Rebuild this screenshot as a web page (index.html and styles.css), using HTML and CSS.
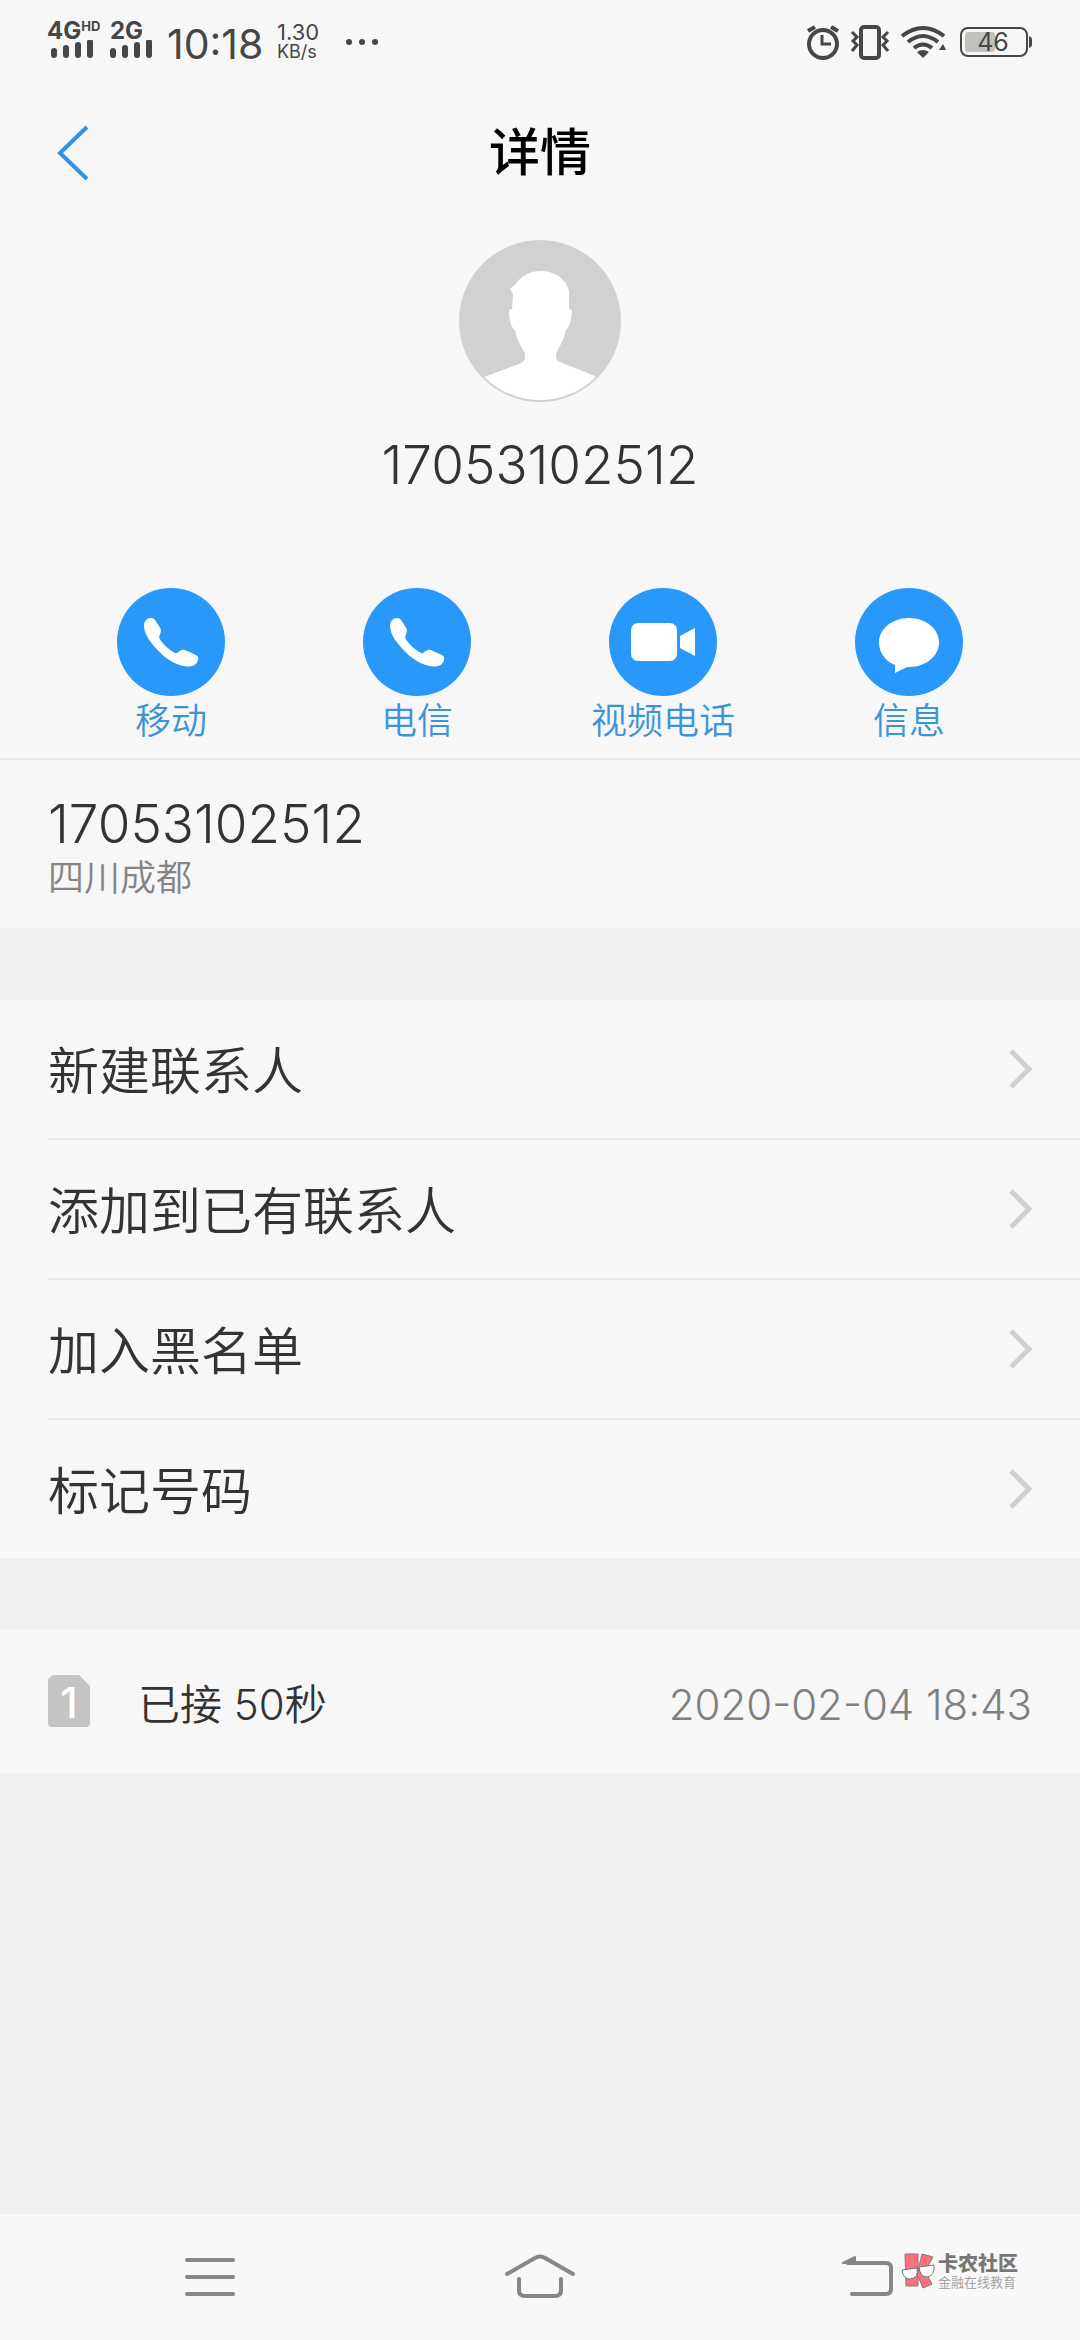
FILE: index.html
```html
<!DOCTYPE html>
<html lang="zh-CN">
<head>
<meta charset="utf-8">
<meta name="viewport" content="width=device-width, initial-scale=1">
<title>详情</title>
<link rel="stylesheet" href="styles.css">
</head>
<body>
<svg class="defs" width="0" height="0" aria-hidden="true">
  <symbol id="phone" viewBox="0 0 108 108">
    <path d="M27 38C27 33 30 30 34 30C36.500 30 38 31.500 39 33.500L43.500 40.500C44.500 42.500 43.500 45 42.500 47.500C41.800 49.500 42.500 51 44 53C48 58 53 62.500 58 65C59.500 65.500 60.500 65 62 63.500C64.500 61.800 66.500 61.300 69 62.500L79 67C81 68 81.500 70 81 72C80 76.500 76 78.500 71 78.500C62 78.500 52 73 43.500 65C34 56 27 46 27 38Z"/>
  </symbol>
  <symbol id="chevron" viewBox="0 0 24 40">
    <path d="M3 2 21 20 3 38" fill="none" stroke="#d0d0d0" stroke-width="5"/>
  </symbol>
</svg>

<div class="panel">
  <div class="status">
    <div class="signal">
      <span class="net">4G<sup>HD</sup></span>
      <svg width="52" height="20" viewBox="0 0 52 20"><path d="M7 11v4M19 8v7M31 5v10M43 2v13" class="bars"/></svg>
    </div>
    <div class="signal">
      <span class="net">2G</span>
      <svg width="52" height="20" viewBox="0 0 52 20"><path d="M3 11v4M15 8v7M27 5v10M39 2v13" class="bars"/></svg>
    </div>
    <time class="clock">10:18</time>
    <div class="speed"><span class="rate">1.30</span><span class="unit">KB/s</span></div>
    <svg class="dots" width="34" height="8" viewBox="0 0 34 8"><circle cx="4" cy="4" r="3"/><circle cx="17" cy="4" r="3"/><circle cx="30" cy="4" r="3"/></svg>
    <svg class="sysicons" width="230" height="40" viewBox="803 22 230 40" role="img" aria-label="闹钟、振动、无线网络">
      <g fill="none" stroke="#464646" stroke-width="4">
        <circle cx="823" cy="44" r="14"/>
        <path d="M822 35v9h9" stroke-width="3"/>
        <path d="M808 31l7-4M838 31l-7-4"/>
        <rect x="861" y="27" width="18" height="31" rx="3"/>
        <path d="M852 32l5 5-4 4 4 4-5 6M888 32l-5 5 4 4-4 4 5 6" stroke-width="3"/>
        <path d="M902 36Q923 20 944 36M908 42Q923 30 938 42M914 48Q923 41 932 48"/>
        <rect x="961" y="28" width="66" height="28" rx="7" stroke-width="2"/>
      </g>
      <g fill="#464646">
        <path d="M917 52Q923 48 929 52L923 58ZM939 50l4-6 3 6Z"/>
        <path d="M1029 36q3 1 3 3v6q0 2-3 3Z"/>
      </g>
      <rect x="965" y="32" width="30" height="20" rx="3" fill="#c1c1be"/>
      <text x="993" y="51" text-anchor="middle" class="level">46</text>
    </svg>
  </div>

  <header class="titlebar">
    <button class="back" type="button" aria-label="返回">
      <svg width="34" height="56" viewBox="0 0 34 56"><path d="M32 2 5 28 32 54" fill="none" stroke="#2f94e4" stroke-width="4"/></svg>
    </button>
    <h1>详情</h1>
  </header>

  <section class="profile">
    <svg class="avatar" width="162" height="162" viewBox="0 0 162 162" role="img" aria-label="头像">
      <defs><clipPath id="face"><circle cx="81" cy="81" r="79"/></clipPath></defs>
      <circle cx="81" cy="81" r="81" fill="#d1d1d1"/>
      <path clip-path="url(#face)" fill="#fff" d="M51 49L56 45C61 37 70 31 82 31C97 31 109 41 110 52L110 69Q113 69 113 72C112 80 111 87 107 90C105 99 101 106 97 113C97 119 98 121 101 122L136 136L145 165H15L25 137L60 124C65 122 66 120 66 117L66 113C61 106 58 99 56 90C51 87 50 77 50 71Q50 69 53 69L54 54Z"/>
    </svg>
    <p class="number">17053102512</p>
  </section>

  <nav class="actions" aria-label="联系方式">
    <button type="button">
      <svg width="108" height="108" viewBox="0 0 108 108"><circle cx="54" cy="54" r="54" fill="#2898fb"/><use href="#phone"/></svg>
      <span>移动</span>
    </button>
    <button type="button">
      <svg width="108" height="108" viewBox="0 0 108 108"><circle cx="54" cy="54" r="54" fill="#2898fb"/><use href="#phone"/></svg>
      <span>电信</span>
    </button>
    <button type="button">
      <svg width="108" height="108" viewBox="0 0 108 108"><circle cx="54" cy="54" r="54" fill="#2898fb"/><rect x="22" y="35" width="46" height="38" rx="7"/><path d="M71 48L86 40V68L71 60Z"/></svg>
      <span>视频电话</span>
    </button>
    <button type="button">
      <svg width="108" height="108" viewBox="0 0 108 108"><circle cx="54" cy="54" r="54" fill="#2898fb"/><path d="M54 30C71 30 84 41 84 54.500C84 68 71 79 54 79Q52 79 50 80L40 85V77C30 73 24 64 24 54.500C24 41 37 30 54 30Z"/></svg>
      <span>信息</span>
    </button>
  </nav>
</div>

<section class="panel origin">
  <p class="number">17053102512</p>
  <p class="place">四川成都</p>
</section>

<ul class="panel menu">
  <li><a href="#new"><span>新建联系人</span><svg width="24" height="40"><use href="#chevron"/></svg></a></li>
  <li><a href="#add"><span>添加到已有联系人</span><svg width="24" height="40"><use href="#chevron"/></svg></a></li>
  <li><a href="#block"><span>加入黑名单</span><svg width="24" height="40"><use href="#chevron"/></svg></a></li>
  <li><a href="#mark"><span>标记号码</span><svg width="24" height="40"><use href="#chevron"/></svg></a></li>
</ul>

<section class="panel log">
  <svg width="42" height="52" viewBox="0 0 42 52"><path d="M5 0H31L42 11V48Q42 52 38 52H4Q0 52 0 48V4Z" fill="#c4c4c4"/><text x="21" y="43" text-anchor="middle" class="sim">1</text></svg>
  <span class="call">已接 50秒</span>
  <time datetime="2020-02-04T18:43">2020-02-04 18:43</time>
</section>

<footer class="navbar">
  <button type="button" aria-label="菜单"><svg width="72" height="48" viewBox="0 0 72 48"><path d="M13 7H59M13 24H59M13 41H59"/></svg></button>
  <button type="button" aria-label="主页"><svg width="72" height="48" viewBox="0 0 72 48"><path d="M3 21L31 5Q36 2 41 5L69 21M15 26V37Q15 43 21 43H51Q57 43 57 37V26"/></svg></button>
  <button type="button" aria-label="返回上一级"><svg width="72" height="48" viewBox="0 0 72 48"><path d="M18 41H52Q57 41 57 36V15Q57 10 52 10H14"/><path d="M9 10L21 4V10Z" class="tip"/></svg></button>
  <div class="brand">
    <svg width="36" height="38" viewBox="0 0 36 38">
      <g fill="#f9717b" stroke="#8d7476">
        <path d="M5 2H18V34H6Z"/>
        <path d="M22 2L33 5L25 19L32 32L23 36L17 22Z"/>
      </g>
      <g fill="#fff" stroke="#777">
        <path d="M2 18L17 16Q19 26 10 27Q3 27 2 18Z"/><path d="M19 15L34 13Q35 24 27 25Q20 25 19 15Z"/>
      </g>
    </svg>
    <p><strong>卡农社区</strong><small>金融在线教育</small></p>
  </div>
</footer>
</body>
</html>
```
FILE: styles.css
```css
* { box-sizing: border-box; }

body {
  margin: 0;
  min-height: 100vh;
  display: flex;
  flex-direction: column;
  background: #efefef;
  color: #333;
  font-family: Inter, "Noto Sans CJK SC", sans-serif;
  font-weight: 400;
}

h1, p, ul { margin: 0; padding: 0; }
svg { display: block; flex: none; }
.defs { position: absolute; }

button {
  border: 0;
  padding: 0;
  background: none;
  font: inherit;
  color: inherit;
}

.panel { background: #f7f7f7; }

/* Status bar */
.status {
  height: 84px;
  padding: 0 47px;
  display: flex;
  align-items: center;
  color: #464646;
}
.signal {
  display: flex;
  flex-direction: column;
  width: 60px;
}
.signal + .signal { margin-left: 3px; }
.net {
  height: 16px;
  font-size: 24px;
  line-height: 14px;
  font-weight: 700;
  white-space: nowrap;
}
.net sup {
  font-size: 13px;
  line-height: 1px;
  vertical-align: 8px;
}
.bars { fill: none; stroke: #464646; stroke-width: 6; stroke-linecap: round; }
.clock {
  width: 110px;
  padding: 4px 0 0;
  margin-left: -3px;
  font-size: 41px;
  line-height: 48px;
}
.speed {
  display: flex;
  flex-direction: column;
  width: 68px;
  line-height: 20px;
}
.rate { font-size: 22px; }
.unit { font-size: 18px; }
.dots { fill: #464646; }
.sysicons { margin-left: auto; }
.level { font-size: 25px; fill: #464646; }

/* Title bar */
.titlebar {
  display: grid;
  grid-template-columns: 1fr auto 1fr;
  align-items: center;
  height: 136px;
  padding: 2px 55px 0;
}
.back { justify-self: start; }
h1 {
  color: #000;
  font-size: 51px;
  line-height: 72px;
  font-weight: 500;
}

/* Contact */
.profile {
  display: flex;
  flex-direction: column;
  align-items: center;
  padding-top: 20px;
}
.number {
  font-size: 53px;
  line-height: 60px;
  font-weight: 350;
}
.profile .number { margin-top: 33px; }

.actions {
  display: grid;
  grid-template-columns: repeat(4, 1fr);
  padding: 93px 48px 12px;
  border-bottom: 2px solid #e8e8e8;
}
.actions button {
  display: flex;
  flex-direction: column;
  align-items: center;
  color: #3c94d8;
  font-size: 36px;
  line-height: 50px;
  font-weight: 350;
}
.actions svg { fill: #fff; }

.origin {
  height: 168px;
  padding: 34px 48px 0;
}
.place {
  color: #848484;
  font-size: 36px;
  line-height: 48px;
  font-weight: 350;
}

/* Menu */
.menu {
  margin-top: 72px;
  padding-left: 48px;
  list-style: none;
}
.menu li { border-bottom: 2px solid #e9e9e9; }
.menu li:last-child { border-bottom: 0; }
.menu a {
  display: flex;
  align-items: center;
  justify-content: space-between;
  height: 138px;
  padding-right: 48px;
  color: inherit;
  font-size: 51px;
  font-weight: 350;
  text-decoration: none;
}
.menu span { padding-bottom: 2px; }

/* Call log */
.log {
  display: flex;
  align-items: center;
  height: 144px;
  margin-top: 71px;
  padding: 0 48px;
  font-size: 42px;
  font-weight: 350;
}
.sim { font-weight: 500; fill: #fff; }
.call { margin-left: 48px; }
.log time {
  margin-left: auto;
  padding-top: 6px;
  color: #808080;
}

/* System navigation */
.navbar {
  position: relative;
  display: grid;
  grid-template-columns: repeat(3, 1fr);
  height: 126px;
  margin-top: auto;
  padding: 0 45px;
  background: #f8f8f8;
}
.navbar button { display: grid; place-items: center; }
.navbar button path {
  fill: none;
  stroke: #868686;
  stroke-width: 4;
  stroke-linecap: round;
  stroke-linejoin: round;
}
.navbar button .tip { fill: #868686; stroke-width: 2; }
.brand {
  position: absolute;
  right: 62px;
  bottom: 50px;
  display: flex;
  align-items: center;
  gap: 2px;
  color: #777;
}
.brand strong, .brand small { display: block; }
.brand strong { font-size: 20px; line-height: 22px; font-weight: 900; }
.brand small { font-size: 13px; line-height: 14px; color: #a5a5a5; }
```
